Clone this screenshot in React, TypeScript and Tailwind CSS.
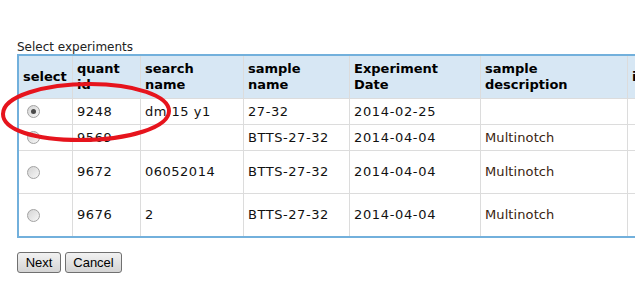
const headers = [
  ["select"],
  ["quant", "id"],
  ["search", "name"],
  ["sample", "name"],
  ["Experiment", "Date"],
  ["sample", "description"],
  ["instrument"],
];

const rows = [
  { checked: true, id: "9248", search: "dm 15 y1", sample: "27-32", date: "2014-02-25", desc: "", h: "h-[26px]" },
  { checked: false, id: "9569", search: "", sample: "BTTS-27-32", date: "2014-04-04", desc: "Multinotch", h: "h-[26px]" },
  { checked: false, id: "9672", search: "06052014", sample: "BTTS-27-32", date: "2014-04-04", desc: "Multinotch", h: "h-[43px]" },
  { checked: false, id: "9676", search: "2", sample: "BTTS-27-32", date: "2014-04-04", desc: "Multinotch", h: "h-[42px] last" },
];

function Radio({ checked }: { checked: boolean }) {
  return (
    <span className="ml-[4px] flex h-[13px] w-[13px] items-center justify-center rounded-full border border-[#a2a2a2] bg-gradient-to-br from-[#d4d4d4] to-[#f7f7f7]">
      {checked && <span className="h-[5px] w-[5px] rounded-full bg-[#4a4a4a]" />}
    </span>
  );
}

export default function App() {
  return (
    <div className="h-[281px] w-[635px] overflow-hidden bg-white pl-[17px] pt-[40px] font-['DejaVu_Sans',sans-serif] text-[#111]">
      <div className="text-[12px] leading-[14px] text-[#222]">Select experiments</div>

      <div className="relative">
        <div className="w-[835px] border-2 border-[#72b0dc]">
          {/* header */}
          <div className="grid h-[43px] grid-cols-[54px_68px_103px_106px_131px_147px_120px] bg-[#d7e7f4] text-[13px] font-bold leading-[16px] text-black">
            {headers.map((lines, i) => (
              <div key={i} className="flex flex-col justify-center border-b border-r border-[#dcdcdc] pl-[4px]">
                {lines.map((l) => (
                  <span key={l}>{l}</span>
                ))}
              </div>
            ))}
          </div>

          {/* body */}
          {rows.map((r) => {
            const last = r.h.includes("last");
            const cell = `flex items-center border-r border-[#dcdcdc] pl-[4px] ${last ? "" : "border-b"}`;
            return (
              <div
                key={r.id}
                className={`grid grid-cols-[54px_68px_103px_106px_131px_147px_120px] text-[13px] leading-[16px] ${r.h.replace(" last", "")}`}
              >
                <div className={cell}>
                  <Radio checked={r.checked} />
                </div>
                <div className={`${cell} tracking-[0.6px]`}>{r.id}</div>
                <div className={`${cell} tracking-[0.5px]`}>{r.search}</div>
                <div className={`${cell} tracking-[0.55px]`}>{r.sample}</div>
                <div className={`${cell} tracking-[0.65px]`}>{r.date}</div>
                <div className={`${cell} tracking-[0.1px] text-[#3a2410]`}>{r.desc}</div>
                <div className={cell}></div>
              </div>
            );
          })}
        </div>

        {/* hand-drawn highlight */}
        <svg className="pointer-events-none absolute left-[-17px] top-[-54px]" width="200" height="160" viewBox="0 0 200 160">
          <path
            d="M 3 114 C 3 96, 45 84, 90 84 C 135 84, 169 96, 169 111 C 169 127, 130 140, 80 140 C 35 140, 3 130, 3 114 Z"
            fill="none"
            stroke="#e6141d"
            strokeWidth="4"
          />
        </svg>
      </div>

      <div className="mt-[14px] flex gap-[4px] font-['Liberation_Sans',Arial,sans-serif] text-[13px] text-black">
        <button className="h-[21px] w-[44px] rounded-[3px] border border-[#707070] bg-gradient-to-b from-[#f2f2f2] to-[#d4d4d4] leading-[19px]">
          Next
        </button>
        <button className="h-[21px] w-[57px] rounded-[3px] border border-[#707070] bg-gradient-to-b from-[#f2f2f2] to-[#d4d4d4] leading-[19px]">
          Cancel
        </button>
      </div>
    </div>
  );
}
